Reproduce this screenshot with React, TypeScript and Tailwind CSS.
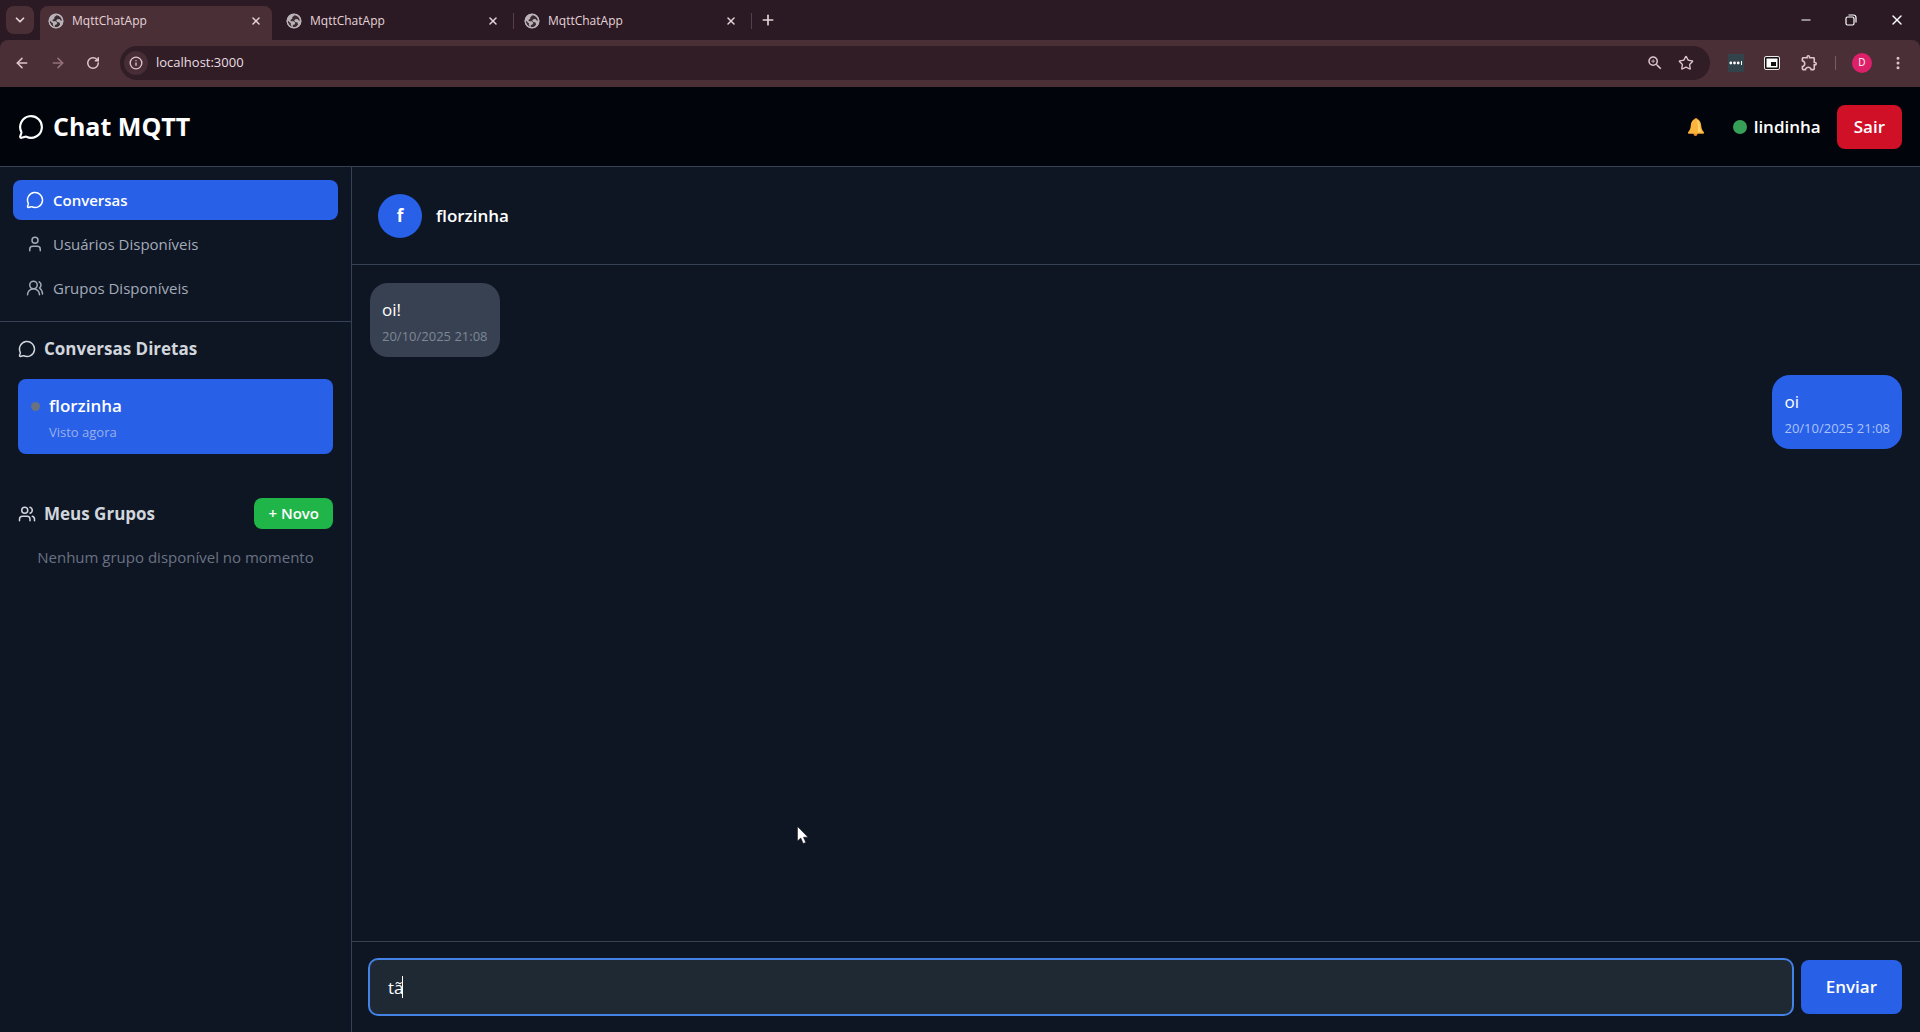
import {
  ArrowLeft, ArrowRight, ChevronDown, EllipsisVertical, Info, MessageCircle, Minus, Plus,
  RotateCw, Star, User, Users, UsersRound, X,
} from "lucide-react";
import { MdOutlineExtension, MdOutlineZoomIn } from "react-icons/md";

const tabs = [
  { title: "MqttChatApp", active: true },
  { title: "MqttChatApp", active: false },
  { title: "MqttChatApp", active: false },
];

const messages = [
  { text: "oi!", time: "20/10/2025 21:08", mine: false },
  { text: "oi", time: "20/10/2025 21:08", mine: true },
];

const navItems = [
  { label: "Conversas", icon: MessageCircle, active: true },
  { label: "Usuários Disponíveis", icon: User, active: false },
  { label: "Grupos Disponíveis", icon: UsersRound, active: false },
];

function GlobeIcon() {
  return (
    <svg viewBox="0 0 16 16" className="size-4 shrink-0">
      <circle cx="8" cy="8" r="7.300" fill="#b9b2b6" />
      <path d="M8.500 2.200 6.300 4.300v1.500l-2 1.200.8 1.300h2.800l1.400 1.600-.8 1.600-1.700.5v2.100c2.500.4 4.300-.6 5.300-2.500l-.6-2-2.300-.6-1-1.500 1-1.200 2.300-.3 1.200 1.500 1.200.3C13.700 5 11.500 2.500 8.500 2.200Z" fill="#3d2c34" />
      <path d="M1.700 7.500 5 10.500l-.2 1.400 1.400 1.900C3.600 13 1.700 10.800 1.700 7.500Z" fill="#3d2c34" />
      <circle cx="8" cy="8" r="6.900" fill="none" stroke="#b9b2b6" strokeWidth="1.200" />
    </svg>
  );
}

function TabStrip() {
  return (
    <div className="flex h-10 items-center bg-[#2b1a23] text-[#e6d3da]">
      <button aria-label="Pesquisar guias" className="ml-1.5 flex size-7 items-center justify-center rounded-lg bg-[#4a3036]">
        <ChevronDown className="size-3.5" strokeWidth={3} />
      </button>
      <div className="ml-1.5 flex h-full items-end">
        {tabs.map((tab, i) => (
          <div
            key={i}
            className={
              tab.active
                ? "flex h-[34px] w-[232px] items-center rounded-t-lg bg-[#4a2f36] pr-2 pl-2 pb-1"
                : "flex h-[34px] w-[238px] items-center pl-3.5 pb-1"
            }
          >
            <GlobeIcon />
            <span className="ml-2 flex-1 text-xs">{tab.title}</span>
            <button aria-label="Fechar guia" className="mr-0.5">
              <X className="size-3" strokeWidth={3} />
            </button>
            {!tab.active && <span className="-mr-1 ml-3 h-4 w-px bg-[#55404a]" />}
          </div>
        ))}
      </div>
      <button aria-label="Nova guia" className="ml-3">
        <Plus className="size-4" strokeWidth={2.5} />
      </button>
      <div className="ml-auto flex items-center gap-8 pr-[15px] text-white">
        <button aria-label="Minimizar"><Minus className="size-3.5" strokeWidth={2} /></button>
        <button aria-label="Restaurar">
          <svg viewBox="0 0 12 12" className="size-3" fill="none" stroke="currentColor" strokeWidth="1.2">
            <rect x="1" y="3" width="8" height="8" rx="1.5" />
            <path d="M3.5 1h5A2.5 2.5 0 0 1 11 3.500v5" />
          </svg>
        </button>
        <button aria-label="Fechar"><X className="size-4" strokeWidth={2} /></button>
      </div>
    </div>
  );
}

function Toolbar() {
  return (
    <div className="flex h-[47px] items-center rounded-t-lg bg-[#4a2f36] pb-0.5 text-[#e0c4ce]">
      <div className="flex items-center gap-5 pl-3.5">
        <button aria-label="Voltar"><ArrowLeft className="size-4" strokeWidth={2.3} /></button>
        <button aria-label="Avançar" className="text-[#95727c]"><ArrowRight className="size-4" strokeWidth={2.3} /></button>
        <button aria-label="Atualizar"><RotateCw className="size-3.5" strokeWidth={2.6} /></button>
      </div>
      <div className="ml-5 flex h-[34px] flex-1 items-center rounded-full bg-[#301d26] pr-4 pl-1">
        <button aria-label="Informações do site" className="flex size-6 items-center justify-center rounded-full bg-[#472d36]">
          <Info className="size-3.5" strokeWidth={2.3} />
        </button>
        <input aria-label="Endereço" defaultValue="localhost:3000" className="ml-2 flex-1 bg-transparent text-[13px] text-[#eadde2] outline-none" />
        <button aria-label="Zoom"><MdOutlineZoomIn className="size-[18px]" /></button>
        <button aria-label="Favoritar" className="ml-3.5"><Star className="size-4" strokeWidth={2} /></button>
      </div>
      <div className="flex items-center pr-3.5">
        <button aria-label="Senhas" className="ml-4.5 flex h-[18px] w-4 items-center justify-center bg-[#33434b]">
          <svg viewBox="0 0 14 4" className="w-3.5" fill="white">
            <circle cx="1.800" cy="2" r="1.400" /><circle cx="5.500" cy="2" r="1.400" /><circle cx="9.200" cy="2" r="1.400" />
            <rect x="12" y="0" width="1" height="4" />
          </svg>
        </button>
        <button aria-label="Picture-in-picture" className="ml-5">
          <svg viewBox="0 0 16 14" className="h-3.5 w-4">
            <rect x="0.500" y="0.500" width="15" height="13" rx="1.500" fill="#111" stroke="#f0e6ea" />
            <rect x="2.500" y="2.500" width="11" height="9" fill="#fff" />
            <rect x="7" y="6" width="5" height="4" fill="#111" />
          </svg>
        </button>
        <button aria-label="Extensões" className="ml-5"><MdOutlineExtension className="size-[19px]" /></button>
        <span className="ml-4 h-3.5 w-px bg-[#7a5a66]" />
        <button aria-label="Perfil" className="ml-4 flex size-5 items-center justify-center rounded-full bg-[#dd2069] text-[10px] text-white">D</button>
        <button aria-label="Menu" className="ml-4.5"><EllipsisVertical className="size-4" strokeWidth={2.5} /></button>
      </div>
    </div>
  );
}

function BellIcon() {
  return (
    <svg viewBox="0 0 18 20" className="h-5 w-[18px]">
      <circle cx="9" cy="2.500" r="1.600" fill="#e79a2c" />
      <circle cx="8.500" cy="17" r="2" fill="#e8862a" />
      <path d="M9 2C5.500 2 4.200 5 3.800 8.500 3.500 12 2.800 13 1.200 15c-.6.9-.2 1.700.8 1.700h14c1 0 1.400-.8.8-1.700-1.600-2-2.300-3-2.600-6.500C13.800 5 12.500 2 9 2Z" fill="#fbb53c" />
      <path d="M9.500 3c2 .6 3 3 3.200 6 .2 3 .8 4.500 1.800 6H11c.6-4 .3-8.500-1.500-12Z" fill="#ffd873" />
    </svg>
  );
}

function Header() {
  return (
    <header className="flex h-20 items-center border-b border-[#364153] bg-[#02040b] px-[18px]">
      <MessageCircle className="size-[26px]" strokeWidth={2} />
      <h1 className="ml-[9px] text-[25px] font-bold">Chat MQTT</h1>
      <div className="ml-auto flex items-center">
        <button aria-label="Notificações"><BellIcon /></button>
        <span className="ml-7 size-3.5 rounded-full bg-[#37a058]" />
        <span className="ml-[7px] text-[17px] font-semibold">lindinha</span>
        <button className="ml-4 h-11 rounded-lg bg-[#d01027] px-[17px] text-[17px] font-semibold">Sair</button>
      </div>
    </header>
  );
}

function Sidebar() {
  return (
    <aside className="w-[352px] shrink-0 border-r border-[#364153]">
      <nav className="flex flex-col gap-1 border-b border-[#364153] p-[13px]">
        {navItems.map(({ label, icon: Icon, active }) => (
          <button
            key={label}
            className={
              active
                ? "flex h-10 items-center gap-[9px] rounded-lg bg-[#2860e8] px-[13px] text-[15px] font-semibold text-white"
                : "flex h-10 items-center gap-[9px] rounded-lg px-[13px] text-[15px] font-medium text-[#a3abb9]"
            }
          >
            <Icon className="size-[18px]" strokeWidth={2} />
            {label}
          </button>
        ))}
      </nav>
      <div className="px-[18px] pt-[13px]">
        <h2 className="flex h-7 items-center gap-2 text-[17px] font-bold text-[#d1d5dc]">
          <MessageCircle className="size-[18px]" strokeWidth={2} />
          Conversas Diretas
        </h2>
        <button className="mt-4 flex h-[75px] w-full rounded-lg bg-[#2860e8] px-[13px] pt-[15px] text-left">
          <span className="mt-2 size-[9px] rounded-full bg-[#6a7282]" />
          <span className="ml-[9px]">
            <span className="block text-[17px] leading-6 font-semibold">florzinha</span>
            <span className="mt-1 block text-[13px] leading-5 text-[#99b0e8]">Visto agora</span>
          </span>
        </button>
        <div className="mt-11 flex items-center justify-between">
          <h2 className="flex items-center gap-2 text-[17px] font-bold text-[#d1d5dc]">
            <Users className="size-[18px]" strokeWidth={2} />
            Meus Grupos
          </h2>
          <button className="h-[31px] rounded-lg bg-[#1fb548] px-3.5 text-[15px] font-semibold">+ Novo</button>
        </div>
        <p className="mt-4 text-center text-[15px] leading-6 text-[#6a7282]">Nenhum grupo disponível no momento</p>
      </div>
    </aside>
  );
}

function Chat() {
  return (
    <main className="flex min-w-0 flex-1 flex-col">
      <div className="flex h-[98px] items-center gap-3.5 border-b border-[#364153] px-[26px]">
        <span className="flex size-11 items-center justify-center rounded-full bg-[#2860e8] text-[17px] font-bold">f</span>
        <h2 className="text-[17px] font-semibold">florzinha</h2>
      </div>
      <div className="flex flex-1 flex-col gap-[18px] p-[18px]">
        {messages.map((m) => (
          <div
            key={m.text}
            className={
              m.mine
                ? "self-end rounded-[18px] bg-[#2860e8] px-3 pt-[15px] pb-[11px]"
                : "self-start rounded-[18px] bg-[#374151] px-3 pt-[15px] pb-[11px]"
            }
          >
            <p className="text-[17px] leading-6">{m.text}</p>
            <p className={m.mine ? "mt-1 text-[13px] leading-5 text-[#a9c3fb]" : "mt-1 text-[13px] leading-5 text-[#7d8896]"}>{m.time}</p>
          </div>
        ))}
      </div>
      <form className="flex gap-[9px] border-t border-[#364153] p-[18px]" onSubmit={(e) => e.preventDefault()}>
        <div className="relative min-w-0 flex-1">
          <input
            aria-label="Mensagem"
            defaultValue="tã"
            className="h-[54px] w-full rounded-lg bg-[#1f2933] px-[18px] text-[17px] ring-2 ring-[#4482e6] outline-none"
          />
          <span className="pointer-events-none absolute top-4 left-8 h-[22px] w-px bg-white" />
        </div>
        <button className="h-[54px] rounded-lg bg-[#2860e8] px-[25px] text-[17px] font-semibold">Enviar</button>
      </form>
    </main>
  );
}

export default function App() {
  return (
    <div className="flex h-screen flex-col overflow-hidden bg-[#0e1624] font-['Open_Sans','Noto_Sans',sans-serif] text-white">
      <div className="bg-[#2b1a23]">
        <TabStrip />
        <Toolbar />
      </div>
      <Header />
      <div className="flex min-h-0 flex-1">
        <Sidebar />
        <Chat />
      </div>
      <svg viewBox="0 0 12 19" className="pointer-events-none absolute top-[80%] left-[41.5%] h-[19px] w-3">
        <path d="M0.500 0.500v14.500l3.300-3 2.400 5.500 2.600-1.100-2.400-5.200h4.600Z" fill="#fff" stroke="#111" strokeWidth="0.500" />
      </svg>
    </div>
  );
}
